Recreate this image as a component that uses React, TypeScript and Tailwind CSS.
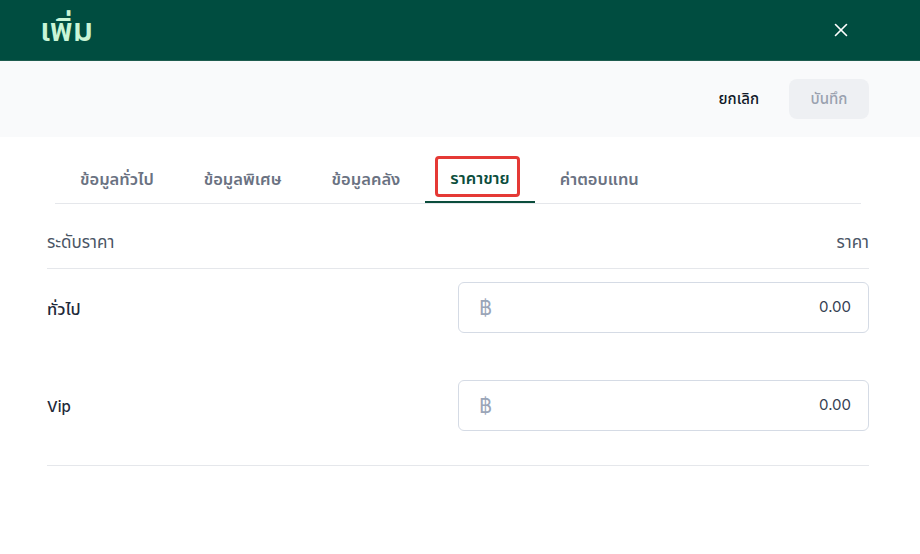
import { X } from "lucide-react";

const tabs = ["ข้อมูลทั่วไป", "ข้อมูลพิเศษ", "ข้อมูลคลัง", "ราคาขาย", "ค่าตอบแทน"];

const rows = ["ทั่วไป", "Vip"];

export default function App() {
  return (
    <div
      className="w-[920px] h-[554px] bg-white overflow-hidden"
      style={{ fontFamily: 'Inter, "Noto Sans", "Noto Sans Thai", sans-serif' }}
    >
      {/* Header */}
      <div className="h-[61px] bg-[#004d40] flex items-center justify-between pl-[40px] pr-[68px] border-b border-[#1e5c4f]">
        <h1 className="text-[32px] font-semibold text-[#c9f5d6] leading-none">เพิ่ม</h1>
        <button className="text-white">
          <X size={22} strokeWidth={1.75} />
        </button>
      </div>

      {/* Actions */}
      <div className="h-[76px] bg-[#f9fafb] flex items-center justify-end gap-[14px] pr-[51px]">
        <button className="h-10 px-4 text-[15px] font-medium text-gray-900">ยกเลิก</button>
        <button className="h-10 w-[80px] rounded-lg bg-[#eef0f3] text-[15px] font-medium text-gray-400">
          บันทึก
        </button>
      </div>

      <div className="pl-[47px] pr-[51px]">
        {/* Tabs */}
        <div className="mx-2 mt-[18px] flex border-b border-gray-200">
          {tabs.map((t, i) => {
            const active = i === 3;
            return (
              <div
                key={t}
                className={
                  active
                    ? "relative h-[48px] px-[25px] flex items-center text-[16.5px] font-semibold text-[#0b4d3c] border-b-2 border-[#0b4d3c] -mb-px"
                    : "h-[48px] px-[25px] flex items-center text-[16.5px] font-semibold text-gray-500"
                }
              >
                {t}
                {active && (
                  <span className="absolute left-[10px] right-[15px] top-[1px] bottom-[4px] border-[3px] border-[#e53935] rounded-[4px]" />
                )}
              </div>
            );
          })}
        </div>

        {/* Table header */}
        <div className="flex justify-between pt-[28px] pb-[16px] border-b border-gray-200 text-[17px] leading-5 text-gray-600">
          <span>ระดับราคา</span>
          <span>ราคา</span>
        </div>

        {/* Rows */}
        <div className="pt-[13px] pb-[34px] flex flex-col gap-[47px] border-b border-gray-200">
          {rows.map((r) => (
            <div key={r} className="flex items-center justify-between">
              <span
                className={
                  r === "Vip"
                    ? "mt-[4px] text-[15px] font-medium text-gray-800"
                    : "mt-[4px] text-[16.5px] font-medium text-gray-800"
                }
              >
                {r}
              </span>
              <div className="w-[411px] h-[51px] rounded-md border border-[#d5dbe5] flex items-center justify-between pl-[20px] pr-[17px]">
                <span className="text-[20px] text-[#9aa5b8]">฿</span>
                <span className="text-[15px] text-gray-700">0.00</span>
              </div>
            </div>
          ))}
        </div>
      </div>
    </div>
  );
}
